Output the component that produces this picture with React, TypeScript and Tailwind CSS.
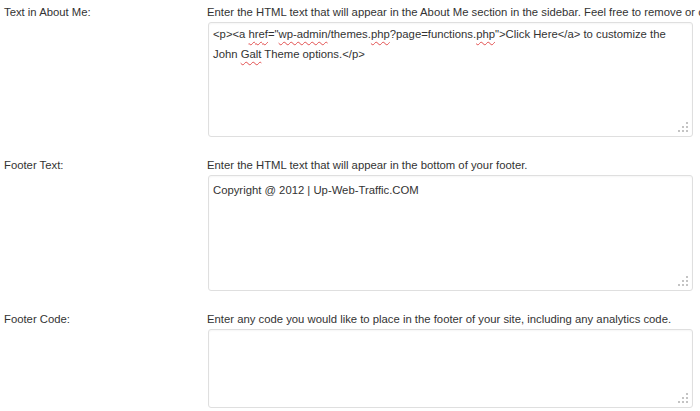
const font = { fontFamily: '"Liberation Sans", Arial, sans-serif' }

function Grip() {
  const dots = [
    [8, 0],
    [8, 4], [4, 4],
    [8, 8], [4, 8], [0, 8],
  ]
  return (
    <svg className="absolute right-[4px] bottom-[4px]" width="10" height="10" viewBox="0 0 10 10">
      {dots.map(([x, y], i) => (
        <rect key={i} x={x} y={y} width="2" height="2" fill="#c4c4c4" />
      ))}
    </svg>
  )
}

function Squiggle({ children }: { children: React.ReactNode }) {
  return (
    <span className="underline decoration-wavy decoration-[#e2504f] decoration-1 underline-offset-[3px]">
      {children}
    </span>
  )
}

function Field({
  label,
  desc,
  height,
  children,
}: {
  label: string
  desc: string
  height: string
  children?: React.ReactNode
}) {
  return (
    <div className="flex">
      <div className="w-[207px] shrink-0 pl-[4px] pt-[4px] text-[11.3px] leading-[16px] text-[#333]">{label}</div>
      <div className="flex-1 min-w-0">
        <div className="pt-[4px] text-[11.3px] leading-[16px] text-[#333] whitespace-nowrap overflow-hidden">{desc}</div>
        <div
          className={`relative mt-[2px] ml-[1px] w-[485px] ${height} rounded-[3px] border border-[#dfdfdf] bg-white px-[4px] pt-[1px] text-[11.3px] leading-[20px] text-[#333] whitespace-nowrap shadow-[inset_0_1px_2px_rgba(0,0,0,0.04)]`}
        >
          {children}
          <Grip />
        </div>
      </div>
    </div>
  )
}

export default function App() {
  return (
    <div className="w-[700px] h-[411px] overflow-hidden bg-white" style={font}>
      <div className="flex flex-col gap-[16px]">
        <Field
          label="Text in About Me:"
          desc="Enter the HTML text that will appear in the About Me section in the sidebar. Feel free to remove or change this text."
          height="h-[115px]"
        >
          <div>
            &lt;p&gt;&lt;a <Squiggle>href</Squiggle>="<Squiggle>wp-admin</Squiggle>/themes.<Squiggle>php</Squiggle>?page=functions.<Squiggle>php</Squiggle>"&gt;Click Here&lt;/a&gt; to customize the
          </div>
          <div>
            John <Squiggle>Galt</Squiggle> Theme options.&lt;/p&gt;
          </div>
        </Field>
        <Field
          label="Footer Text:"
          desc="Enter the HTML text that will appear in the bottom of your footer."
          height="h-[116px]"
        >
          <div className="pt-[3px]">Copyright @ 2012 | Up-Web-Traffic.COM</div>
        </Field>
        <Field
          label="Footer Code:"
          desc="Enter any code you would like to place in the footer of your site, including any analytics code."
          height="h-[79px]"
        />
      </div>
    </div>
  )
}
